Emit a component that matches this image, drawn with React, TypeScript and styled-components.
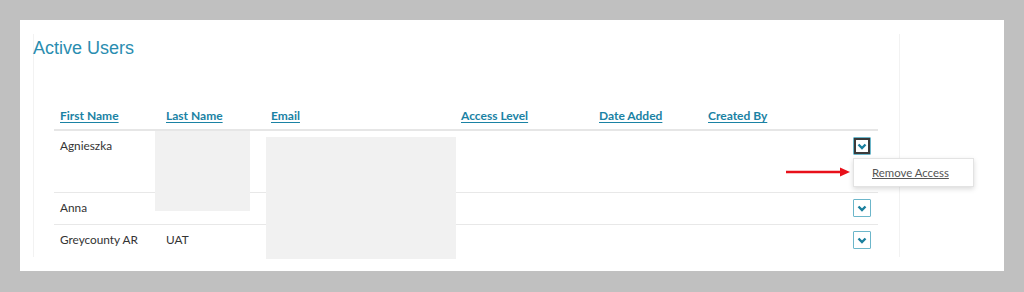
import React from "react"
import styled, { createGlobalStyle } from "styled-components"

const GlobalStyle = createGlobalStyle`
  html, body {
    margin: 0;
    padding: 0;
    background: #c0c0c0;
  }
`

const Panel = styled.div`
  margin: 20px;
  width: 984px;
  height: 251px;
  box-sizing: border-box;
  background: #ffffff;
  padding: 14px 104px 14px 13px;
`

const Inner = styled.section`
  height: 100%;
  box-sizing: border-box;
  border-left: 1px solid #f2f2f2;
  border-right: 1px solid #f2f2f2;
  padding: 3px 21px 0 0;
`

const Title = styled.h2`
  margin: 0 0 44px -1px;
  font-family: "Liberation Sans", Arial, sans-serif;
  font-weight: 400;
  font-size: 18px;
  line-height: 22px;
  color: #2a8db0;
`

const Table = styled.div`
  position: relative;
  margin-left: 20px;
  font-family: Lato, "Open Sans", sans-serif;
  font-size: 12px;
  line-height: 16px;
`

const columns = "106px 105px 190px 138px 109px 1fr 40px"

const HeadRow = styled.div`
  display: grid;
  grid-template-columns: ${columns};
  height: 26px;
  align-items: center;
  border-bottom: 2px solid #e6e6e6;
`

const HeadCell = styled.a`
  padding-left: 6px;
  font-weight: 700;
  color: #1a82a4;
  text-decoration: underline;
  text-underline-offset: 2px;
  cursor: pointer;
  white-space: nowrap;
`

const Row = styled.div<{ $height: number; $last?: boolean }>`
  display: grid;
  grid-template-columns: ${columns};
  height: ${(p) => p.$height}px;
  box-sizing: border-box;
  align-items: start;
  border-bottom: ${(p) => (p.$last ? "none" : "1px solid #e8e8e8")};
`

const Cell = styled.div`
  padding: 7px 0 0 6px;
  color: #333333;
  font-size: 11.8px;
  white-space: nowrap;
`

const ActionCell = styled.div`
  display: flex;
  justify-content: flex-end;
  padding: 6px 7px 0 0;
`

const MenuAnchor = styled.div`
  position: relative;
`

const ToggleButton = styled.button<{ $focused?: boolean }>`
  display: flex;
  align-items: center;
  justify-content: center;
  width: 18px;
  height: 18px;
  padding: 0;
  background: #ffffff;
  border: 1px solid #6cb6ca;
  border-radius: 1px;
  box-shadow: ${(p) => (p.$focused ? "inset 0 0 0 2px #3a3a3a" : "none")};
  cursor: pointer;
`

const Menu = styled.div`
  position: absolute;
  top: 21px;
  left: 0;
  width: 121px;
  height: 29px;
  box-sizing: border-box;
  display: flex;
  align-items: center;
  padding-left: 18px;
  background: #ffffff;
  border: 1px solid #e3e3e3;
  box-shadow: 0 2px 5px rgba(0, 0, 0, 0.15);
  z-index: 2;
`

const MenuItem = styled.a`
  font-size: 11.4px;
  color: #555555;
  text-decoration: underline;
  white-space: nowrap;
  cursor: pointer;
`

const Arrow = styled.svg`
  position: absolute;
  right: calc(100% + 4px);
  top: 8px;
`

const Redaction = styled.div<{ $left: number; $top: number; $w: number; $h: number }>`
  position: absolute;
  left: ${(p) => p.$left}px;
  top: ${(p) => p.$top}px;
  width: ${(p) => p.$w}px;
  height: ${(p) => p.$h}px;
  background: #f1f1f1;
`

function Chevron() {
  return (
    <svg width="10" height="7" viewBox="0 0 10 7">
      <path d="M1.5 1.5 L5 5 L8.5 1.5" fill="none" stroke="#1a7f9e" strokeWidth="2.4" />
    </svg>
  )
}

const headers = ["First Name", "Last Name", "Email", "Access Level", "Date Added", "Created By"]

const users = [
  { first: "Agnieszka", last: "", height: 62, open: true },
  { first: "Anna", last: "", height: 32, open: false },
  { first: "Greycounty AR", last: "UAT", height: 32, open: false },
]

export default function App() {
  return (
    <>
      <GlobalStyle />
      <Panel>
        <Inner>
          <Title>Active Users</Title>
          <Table>
            <HeadRow>
              {headers.map((h) => (
                <HeadCell key={h}>{h}</HeadCell>
              ))}
              <span />
            </HeadRow>
            {users.map((u, i) => (
              <Row key={u.first} $height={u.height} $last={i === users.length - 1}>
                <Cell>{u.first}</Cell>
                <Cell>{u.last}</Cell>
                <Cell />
                <Cell />
                <Cell />
                <Cell />
                <ActionCell>
                  <MenuAnchor>
                    <ToggleButton $focused={u.open}>
                      <Chevron />
                    </ToggleButton>
                    {u.open && (
                      <Menu>
                        <Arrow width="64" height="10" viewBox="0 0 64 10">
                          <line x1="0" y1="5" x2="56" y2="5" stroke="#e8101a" strokeWidth="2.5" />
                          <polygon points="54,0.5 64,5 54,9.5" fill="#e8101a" />
                        </Arrow>
                        <MenuItem>Remove Access</MenuItem>
                      </Menu>
                    )}
                  </MenuAnchor>
                </ActionCell>
              </Row>
            ))}
            <Redaction $left={101} $top={28} $w={95} $h={80} />
            <Redaction $left={212} $top={34} $w={190} $h={122} />
          </Table>
        </Inner>
      </Panel>
    </>
  )
}
